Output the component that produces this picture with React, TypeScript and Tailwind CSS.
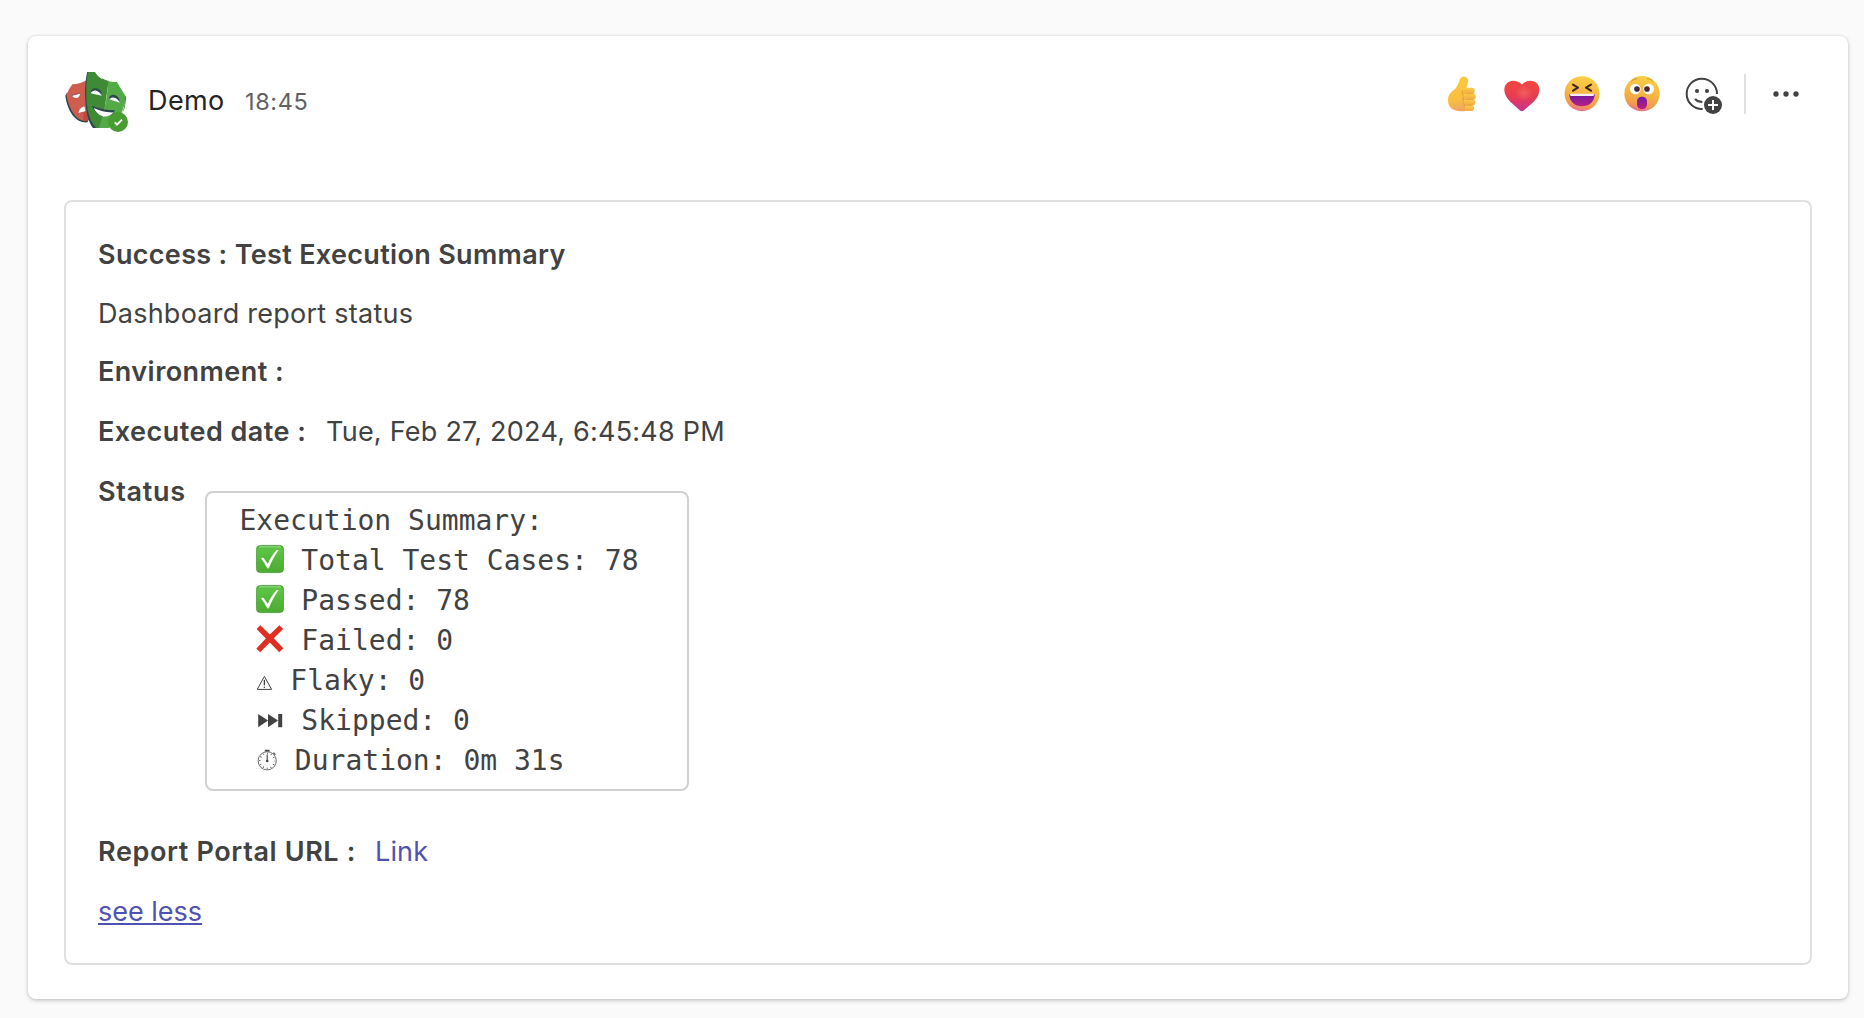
import React from "react";

function Avatar() {
  return (
    <svg width="68" height="66" viewBox="21 18 204 198" role="img" aria-label="Demo avatar">
      <defs>
        <clipPath id="avatar-clip">
          <rect x="27" y="30" width="192" height="168" />
        </clipPath>
      </defs>
      <g clipPath="url(#avatar-clip)">
        <path d="M36 92L31 101C34 124 42 146 54 161C64 173 78 183 98 181L104 160Z" fill="#2d4552" />
        <path d="M52 67C68 66 84 62 102 50V174C86 180 71 174 58 158C46 142 38 121 34 98C39 87 45 77 52 67Z" fill="#cf5d4e" />
        <path d="M86 148L102 152V174C97 177 91 177 84 176Z" fill="#b84c40" />
        <path d="M50 100C56 98 66 97 75 93C75 103 70 108 64 108C58 108 53 105 50 100Z" fill="#fff" />
        <path d="M50 101C56 98 67 97 75 93" fill="none" stroke="#5b3d48" strokeWidth="2.5" />
        <path d="M69 152C72 142 79 134 88 133L91 147C84 150 77 151 69 152Z" fill="#fff" />
        <path d="M69 153C71 142 78 134 87 132" fill="none" stroke="#a5473f" strokeWidth="1.5" />
        <path d="M97 28C91 52 89 86 91 116C93 148 99 182 117 202H140V28Z" fill="#2d4552" />
        <path d="M99 27H118C131 43 145 54 161 57L140 202H128C107 184 98 154 95 124C93 92 93 55 99 27Z" fill="#3f8a35" />
        <path d="M118 27H142V52C132 46 124 38 118 27Z" fill="#fff" />
        <path d="M159 56C169 60 178 61 186 60C194 74 203 89 213 104C210 124 205 141 198 156C187 180 172 195 152 202H131C137 180 142 164 147 145C154 115 159 86 159 56Z" fill="#54aa46" />
        <path d="M213 104L211 126C210 138 205 148 201 155C207 140 210 124 210 104Z" fill="#357b2c" />
        <path d="M106 93C108 80 119 75 130 81C136 84 139 89 140 96Z" fill="#2d4552" />
        <path d="M107 94C111 87 118 84 126 87C132 89 137 94 140 101C129 99 118 96 107 94Z" fill="#fff" />
        <path d="M161 112C163 99 174 95 184 101C191 105 194 111 194 119Z" fill="#2d4552" />
        <path d="M162 112C168 106 175 105 182 109C188 112 192 117 195 122C184 119 172 115 162 112Z" fill="#fff" />
        <path d="M111 131C132 140 156 145 180 145C173 159 158 165 144 161C127 157 116 145 111 131Z" fill="#2d4552" />
        <path d="M116 138C135 147 154 152 175 151C164 164 152 166 141 162C130 158 121 149 116 138Z" fill="#fff" />
      </g>
      <circle cx="189" cy="180" r="30" fill="#489c31" />
      <path d="M179 181L186 188L201 173" fill="none" stroke="#fff" strokeWidth="5.5" />
    </svg>
  );
}

function ThumbsUp() {
  return (
    <svg width="60" height="60" viewBox="6 12 180 180" role="img" aria-label="Like">
      <defs>
        <linearGradient id="thumb-hand" x1="0.4" y1="0" x2="0.6" y2="1">
          <stop offset="0" stopColor="#fccb38" />
          <stop offset="0.65" stopColor="#f9bd40" />
          <stop offset="1" stopColor="#efa265" />
        </linearGradient>
        <linearGradient id="thumb-finger" x1="0" y1="0" x2="0" y2="1">
          <stop offset="0" stopColor="#fdcd48" />
          <stop offset="1" stopColor="#f3aa44" />
        </linearGradient>
      </defs>
      <path
        d="M88 62C91 53 97 49 104 50C113 51 116 59 114 67C112 75 110 80 108 86L124 88V151C116 154 98 154 84 153C66 151 54 140 54 121C54 106 61 97 71 90C80 83 84 73 88 62Z"
        fill="url(#thumb-hand)"
      />
      <path d="M98 92C95 98 98 104 101 108C98 115 99 120 103 124C101 131 102 136 106 140C105 145 107 149 110 152" fill="none" stroke="#df9138" strokeWidth="3" />
      <rect x="98" y="83" width="36" height="18" rx="9" fill="url(#thumb-finger)" />
      <rect x="100" y="100" width="37" height="19" rx="9" fill="url(#thumb-finger)" />
      <rect x="102" y="118" width="34" height="18" rx="8.5" fill="url(#thumb-finger)" />
      <rect x="104" y="135" width="28" height="18" rx="8.5" fill="url(#thumb-finger)" />
      <path d="M106 101H130M108 118.5H130M109 135.5H128" stroke="#df923c" strokeWidth="1.8" />
    </svg>
  );
}

function Heart() {
  return (
    <svg width="60" height="60" viewBox="186 12 180 180" role="img" aria-label="Heart">
      <defs>
        <linearGradient id="heart-fill" x1="0" y1="0" x2="0" y2="1">
          <stop offset="0" stopColor="#f2473f" />
          <stop offset="0.5" stopColor="#e83d50" />
          <stop offset="1" stopColor="#c73193" />
        </linearGradient>
        <radialGradient id="heart-shine" cx="0.56" cy="0.4" r="0.26">
          <stop offset="0" stopColor="#f66a68" stopOpacity="0.7" />
          <stop offset="1" stopColor="#f66a68" stopOpacity="0" />
        </radialGradient>
      </defs>
      <path d="M276 74C269 65 259 62 249 62C234 63 223 73 223 89C223 104 233 118 246 130L269 151C274 155 278 155 282 151L306 130C319 118 328 104 328 89C328 73 317 62 302 62C291 62 282 66 276 74Z" fill="url(#heart-fill)" />
      <path d="M276 74C269 65 259 62 249 62C234 63 223 73 223 89C223 104 233 118 246 130L269 151C274 155 278 155 282 151L306 130C319 118 328 104 328 89C328 73 317 62 302 62C291 62 282 66 276 74Z" fill="url(#heart-shine)" />
    </svg>
  );
}

function FaceGradient({ id }: { id: string }) {
  return (
    <linearGradient id={id} x1="0.6" y1="0" x2="0.4" y2="1">
      <stop offset="0" stopColor="#fad046" />
      <stop offset="0.5" stopColor="#f5b642" />
      <stop offset="0.82" stopColor="#f19a4c" />
      <stop offset="1" stopColor="#ea6c9c" />
    </linearGradient>
  );
}

function Laugh() {
  return (
    <svg width="60" height="60" viewBox="366 12 180 180" role="img" aria-label="Laugh">
      <defs>
        <FaceGradient id="laugh-face" />
        <linearGradient id="laugh-mouth" x1="0" y1="0" x2="0" y2="1">
          <stop offset="0" stopColor="#6a1ba0" />
          <stop offset="1" stopColor="#bb1f86" />
        </linearGradient>
      </defs>
      <circle cx="456" cy="101" r="52.5" fill="url(#laugh-face)" />
      <path d="M429 74L444 83L429 92M483 74L468 83L483 92" fill="none" stroke="#3d2432" strokeWidth="6" strokeLinejoin="round" strokeLinecap="round" />
      <path d="M418 102H494C494 125 478 139 456 139C434 139 418 125 418 102Z" fill="url(#laugh-mouth)" />
      <path d="M419 101H493C493 106 490 108 486 108H426C422 108 419 106 419 101Z" fill="#f5edfa" />
    </svg>
  );
}

function Surprised() {
  return (
    <svg width="60" height="60" viewBox="36 132 180 180" role="img" aria-label="Surprised">
      <defs>
        <FaceGradient id="surprised-face" />
        <linearGradient id="surprised-mouth" x1="0" y1="0" x2="0" y2="1">
          <stop offset="0" stopColor="#6d1fae" />
          <stop offset="1" stopColor="#c01878" />
        </linearGradient>
      </defs>
      <circle cx="126" cy="221" r="53" fill="url(#surprised-face)" />
      <path d="M94 184C99 179 104 176 110 176M142 176C148 176 153 179 157 183" fill="none" stroke="#cf9838" strokeWidth="3" strokeLinecap="round" />
      <circle cx="106" cy="207" r="16" fill="#fff" />
      <circle cx="146" cy="207" r="16" fill="#fff" />
      <circle cx="111" cy="207" r="8.5" fill="#472a3a" />
      <circle cx="141" cy="207" r="8.5" fill="#472a3a" />
      <rect x="111" y="230" width="30" height="37" rx="14" fill="url(#surprised-mouth)" />
    </svg>
  );
}

function AddReaction() {
  return (
    <svg width="60" height="60" viewBox="216 132 180 180" role="img" aria-label="Add reaction">
      <path d="M308 267A45.5 45.5 0 1 1 351 222" fill="none" stroke="#424242" strokeWidth="6" />
      <circle cx="291" cy="213" r="6.2" fill="#424242" />
      <circle cx="321" cy="213" r="6.2" fill="#424242" />
      <path d="M285 237C291 243 298 246 307 246" fill="none" stroke="#424242" strokeWidth="6" />
      <circle cx="339" cy="255" r="27" fill="#424242" />
      <path d="M339 240V270M324 255H354" stroke="#fff" strokeWidth="6" />
    </svg>
  );
}

function MoreDots() {
  return (
    <svg width="60" height="60" viewBox="468 132 180 180" role="img" aria-label="More options">
      <circle cx="528" cy="222" r="8" fill="#424242" />
      <circle cx="558" cy="222" r="8" fill="#424242" />
      <circle cx="588" cy="222" r="8" fill="#424242" />
    </svg>
  );
}

function CheckEmoji() {
  return (
    <svg className="block" width="28" height="40" viewBox="0 1 28 40" role="img" aria-label="check">
      <defs>
        <linearGradient id="check-bg" x1="0" y1="0" x2="0" y2="1">
          <stop offset="0" stopColor="#55b046" />
          <stop offset="0.15" stopColor="#5cc343" />
          <stop offset="1" stopColor="#4cab2f" />
        </linearGradient>
      </defs>
      <rect x="0.4" y="5.4" width="27.2" height="27.2" rx="4" fill="url(#check-bg)" stroke="#479b38" strokeWidth="0.8" />
      <path d="M3.5 6.9H24.5" stroke="#8fd980" strokeWidth="1.4" strokeLinecap="round" />
      <path d="M5 18.2L7.2 17.6L11.7 23.8C14.3 18.2 17.3 13.5 20.3 10.2L22.8 10C18.8 15.3 15.2 21.8 12.8 28.2H11.2C9.4 24.6 7.4 21.3 5 18.2Z" fill="#fff" />
    </svg>
  );
}

function CrossEmoji() {
  return (
    <svg className="block" width="28" height="40" viewBox="0 1 28 40" role="img" aria-label="cross">
      <path d="M4.4 5.2L13.8 14.5L23.4 5.2L27.2 8.9L17.8 18.3L27.3 28.2L23.3 32.3L13.8 22.6L4.2 32.3L0.4 28.6L9.8 18.6L0.6 9Z" fill="#df2f20" />
    </svg>
  );
}

function WarningGlyph() {
  return (
    <svg className="block" width="17" height="40" viewBox="0 1 17 40" role="img" aria-label="warning">
      <path d="M1.2 29.4L8.4 16.4L15.6 29.4Z" fill="none" stroke="#424242" strokeWidth="1" />
      <path d="M8.4 19.8V25.4" stroke="#424242" strokeWidth="1.3" />
      <circle cx="8.4" cy="27.3" r="0.8" fill="#424242" />
    </svg>
  );
}

function SkipGlyph() {
  return (
    <svg className="block" width="28" height="40" viewBox="0 1 28 40" role="img" aria-label="skip">
      <path d="M2.2 14V27.3L12 20.6ZM12 14V27.3L22 20.6ZM22.2 14H26.2V27.3H22.2Z" fill="#424242" />
    </svg>
  );
}

function StopwatchGlyph() {
  return (
    <svg className="block" width="21" height="40" viewBox="0 1 21 40" role="img" aria-label="stopwatch">
      <circle cx="11.2" cy="20.8" r="9.1" fill="none" stroke="#5a5a5a" strokeWidth="0.9" />
      <circle cx="11.2" cy="20.8" r="7.4" fill="none" stroke="#424242" strokeWidth="1.5" strokeDasharray="0.8 3.075" strokeDashoffset="0.4" />
      <path d="M8.8 10.6H13.6" stroke="#424242" strokeWidth="1.6" />
      <path d="M17.4 12.6L19.4 14.6" stroke="#424242" strokeWidth="1.3" />
      <path d="M11.2 14.5V21.6" stroke="#424242" strokeWidth="1.1" />
      <circle cx="11.2" cy="21" r="1.3" fill="#424242" />
    </svg>
  );
}

const results = [
  { icon: <CheckEmoji />, width: "w-[28px]", text: "Total Test Cases: 78" },
  { icon: <CheckEmoji />, width: "w-[28px]", text: "Passed: 78" },
  { icon: <CrossEmoji />, width: "w-[28px]", text: "Failed: 0" },
  { icon: <WarningGlyph />, width: "w-[17px]", text: "Flaky: 0" },
  { icon: <SkipGlyph />, width: "w-[28px]", text: "Skipped: 0" },
  { icon: <StopwatchGlyph />, width: "w-[21.5px]", text: "Duration: 0m 31s" },
];

export default function App() {
  return (
    <div className="h-[1018px] w-[1864px] overflow-hidden bg-[#fafafa] pl-7 pt-9 font-['Inter',sans-serif] text-[27px] leading-10 text-[#424242]">
      <article className="h-[963px] w-[1820px] rounded-[8px] bg-white shadow-[0_2px_4px_rgba(0,0,0,0.16),0_0_3px_rgba(0,0,0,0.14)]">
        <header className="flex h-[164px] items-start justify-between pl-[34px] pr-8">
          <div className="flex items-start pt-8">
            <Avatar />
            <div className="ml-[18px] mt-[13px] flex items-baseline">
              <span className="w-[97px] tracking-[0.4px] text-[#242424]">Demo</span>
              <time className="text-[23.5px] tracking-[0.6px] text-[#616161]">18:45</time>
            </div>
          </div>
          <div className="flex items-center pt-7">
            <ThumbsUp />
            <Heart />
            <Laugh />
            <Surprised />
            <AddReaction />
            <div className="ml-3 mr-[10px] h-10 w-[2px] bg-[#e0e0e0]" />
            <MoreDots />
          </div>
        </header>

        <section className="mx-9 h-[765px] rounded-[8px] border-2 border-[#e0e0e0] px-8 pt-[33px]">
          <h1 className="font-semibold tracking-[0.33px]">Success : Test Execution Summary</h1>
          <p className="mt-[19px] tracking-[0.25px]">Dashboard report status</p>
          <p className="mt-[18px] font-semibold tracking-[0.45px]">Environment :</p>
          <div className="mt-5 flex">
            <span className="w-[228px] font-semibold tracking-[0.47px]">Executed date :</span>
            <span className="tracking-[0.24px]">Tue, Feb 27, 2024, 6:45:48 PM</span>
          </div>
          <div className="mt-5 flex items-start">
            <span className="w-[107px] font-semibold tracking-[0.7px]">Status</span>
            <div className="mt-[19px] h-[300px] w-[484px] rounded-[8px] border-2 border-[#d1d1d1] pl-[32.5px] pt-2 font-['DejaVu_Sans_Mono',monospace] text-[28px]">
              <p>Execution Summary:</p>
              {results.map((row) => (
                <div key={row.text} className="flex h-10 whitespace-pre pl-[16.5px]">
                  <span className={`${row.width} shrink-0`}>{row.icon}</span>
                  <span className="pl-[0.5px]"> {row.text}</span>
                </div>
              ))}
            </div>
          </div>
          <div className="mt-[41px] flex">
            <span className="w-[277px] font-semibold tracking-[0.62px]">Report Portal URL :</span>
            <a className="tracking-[0.15px] text-[#4f52b2]">Link</a>
          </div>
          <div className="mt-5">
            <a className="text-[#4f52b2] underline decoration-2 underline-offset-[2px] [text-decoration-skip-ink:none]">see less</a>
          </div>
        </section>
      </article>
    </div>
  );
}
